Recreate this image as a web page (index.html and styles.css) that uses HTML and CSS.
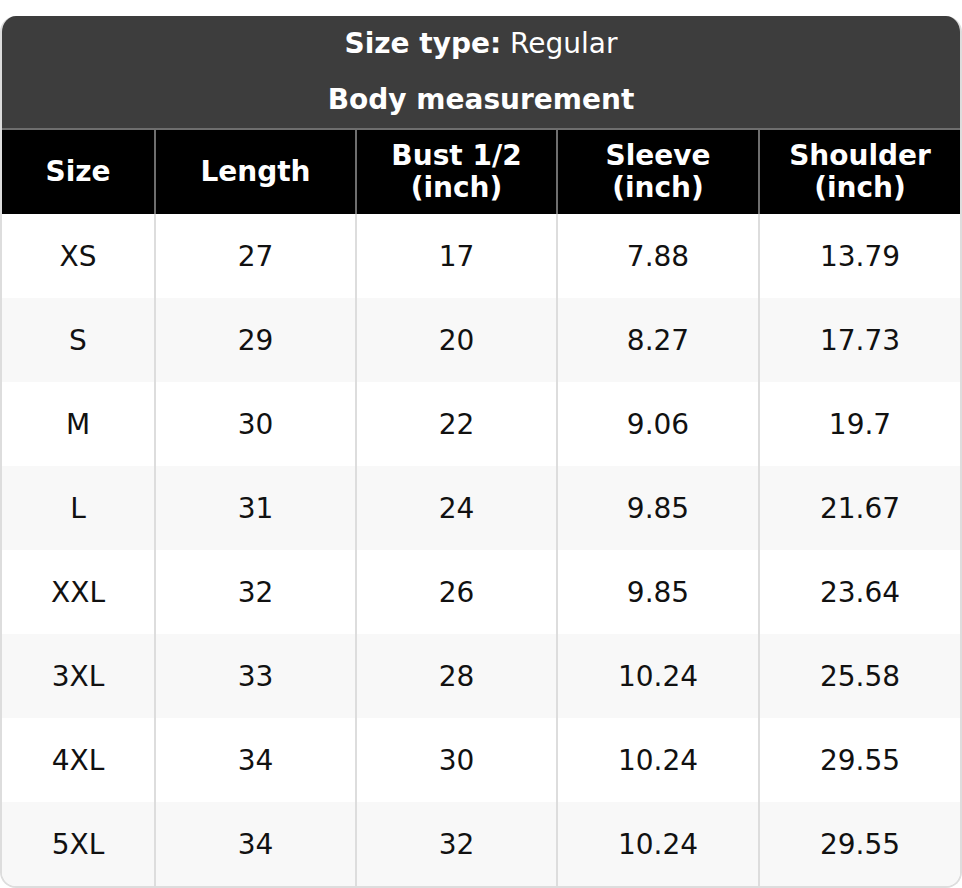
FILE: index.html
```html
<!DOCTYPE html>
<html>
<head>
<meta charset="utf-8">
<link rel="stylesheet" href="styles.css">
</head>
<body>
<div class="chart">
  <div class="caption">
    <div class="cap-line"><b>Size type:</b> Regular</div>
    <div class="cap-line"><b>Body measurement</b></div>
  </div>
  <div class="grid">
    <div class="th">Size</div>
    <div class="th">Length</div>
    <div class="th">Bust 1/2<br>(inch)</div>
    <div class="th">Sleeve<br>(inch)</div>
    <div class="th">Shoulder<br>(inch)</div>

    <div class="td">XS</div><div class="td">27</div><div class="td">17</div><div class="td">7.88</div><div class="td">13.79</div>
    <div class="td alt">S</div><div class="td alt">29</div><div class="td alt">20</div><div class="td alt">8.27</div><div class="td alt">17.73</div>
    <div class="td">M</div><div class="td">30</div><div class="td">22</div><div class="td">9.06</div><div class="td">19.7</div>
    <div class="td alt">L</div><div class="td alt">31</div><div class="td alt">24</div><div class="td alt">9.85</div><div class="td alt">21.67</div>
    <div class="td">XXL</div><div class="td">32</div><div class="td">26</div><div class="td">9.85</div><div class="td">23.64</div>
    <div class="td alt">3XL</div><div class="td alt">33</div><div class="td alt">28</div><div class="td alt">10.24</div><div class="td alt">25.58</div>
    <div class="td">4XL</div><div class="td">34</div><div class="td">30</div><div class="td">10.24</div><div class="td">29.55</div>
    <div class="td alt">5XL</div><div class="td alt">34</div><div class="td alt">32</div><div class="td alt">10.24</div><div class="td alt">29.55</div>
  </div>
</div>
</body>
</html>
```
FILE: styles.css
```css
html, body {
  margin: 0;
  padding: 0;
  background: #ffffff;
}
body {
  padding-top: 16px;
  font-family: "DejaVu Sans", sans-serif;
  font-size: 28px;
}
.chart {
  width: 962px;
  box-sizing: border-box;
  border: 2px solid #dddddd;
  border-top: none;
  border-radius: 16px;
  overflow: hidden;
}
.caption {
  background: #3d3d3d;
  color: #ffffff;
  margin: 0 -2px;
  border-bottom: 2px solid #6e6e6e;
}
.cap-line {
  height: 56px;
  line-height: 56px;
  text-align: center;
}
.cap-line b {
  font-weight: bold;
}
.grid {
  display: grid;
  grid-template-columns: 152px 201px 201px 202px 202px;
  grid-auto-rows: 84px;
}
.th, .td {
  display: flex;
  align-items: center;
  justify-content: center;
  text-align: center;
  box-sizing: border-box;
}
.th {
  background: #000000;
  color: #ffffff;
  font-weight: bold;
  line-height: 32px;
  border-left: 2px solid #6e6e6e;
}
.td {
  background: #ffffff;
  color: #111111;
  border-left: 2px solid #dddddd;
}
.td.alt {
  background: #f8f8f8;
}
.th:nth-child(5n+1), .td:nth-child(5n+1) {
  border-left: none;
}
```
